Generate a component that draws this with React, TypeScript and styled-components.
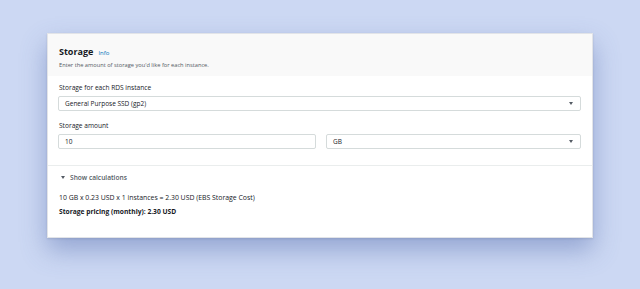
import React from "react";
import styled, { createGlobalStyle } from "styled-components";

const Global = createGlobalStyle`
  html, body { margin: 0; padding: 0; background: #ccd8f3; }
  body { font-family: "Open Sans", "Liberation Sans", sans-serif; }
`;

const Page = styled.div`
  width: 640px;
  height: 289px;
  box-sizing: border-box;
  padding: 33px 47px 0 47px;
  background: #ccd8f3;
`;

const Card = styled.div`
  width: 546px;
  height: 205px;
  box-sizing: border-box;
  background: #ffffff;
  border: 1px solid #e2e4e8;
  box-shadow: 0 12px 24px rgba(80, 105, 170, 0.45), 0 1px 2px rgba(0,0,0,0.12);
  display: flex;
  flex-direction: column;
`;

const Header = styled.div`
  background: #f9f9f9;
  height: 42px;
  box-sizing: border-box;
  padding: 11px 11px 0 11px;
  display: flex;
  flex-direction: column;
  gap: 3px;
`;

const TitleRow = styled.div`
  display: flex;
  align-items: baseline;
  gap: 5px;
`;

const Title = styled.span`
  font-size: 9px;
  font-weight: 700;
  color: #16191f;
`;

const Info = styled.span`
  font-size: 6px;
  color: #0073bb;
`;

const Desc = styled.div`
  font-size: 5.7px;
  color: #545b64;
`;

const Body = styled.div`
  padding: 7px 11px 0 10px;
  display: flex;
  flex-direction: column;
`;

const Label = styled.div`
  font-size: 6.6px;
  color: #16191f;
  margin-bottom: 4px;
  padding-left: 1px;
`;

const Field = styled.div<{ $w?: string }>`
  height: 15px;
  box-sizing: border-box;
  border: 1px solid #d5dbdb;
  border-radius: 2px;
  background: #fff;
  display: flex;
  align-items: center;
  justify-content: space-between;
  padding: 0 7px 0 6px;
  font-size: 6.5px;
  color: #16191f;
  ${(p) => (p.$w ? `width: ${p.$w}; flex: none;` : "flex: 1;")}
`;

const Caret = styled.span`
  width: 0;
  height: 0;
  border-left: 2.5px solid transparent;
  border-right: 2.5px solid transparent;
  border-top: 3.5px solid #545b64;
`;

const Group = styled.div<{ $mb: number }>`
  margin-bottom: ${(p) => p.$mb}px;
`;

const Row = styled.div`
  display: flex;
  gap: 10px;
`;

const Divider = styled.div`
  height: 1px;
  background: #eaeded;
`;

const Calc = styled.div`
  padding: 7px 11px 0 11px;
  display: flex;
  flex-direction: column;
`;

const Toggle = styled.div`
  display: flex;
  align-items: center;
  gap: 5px;
  font-size: 6.6px;
  font-weight: 600;
  color: #545b64;
  margin-bottom: 11px;
`;

const SmallCaret = styled.span`
  width: 0;
  height: 0;
  border-left: 2.5px solid transparent;
  border-right: 2.5px solid transparent;
  border-top: 3.5px solid #545b64;
  margin-left: 2px;
`;

const Line = styled.div<{ $bold?: boolean }>`
  font-size: ${(p) => (p.$bold ? "6.7px" : "6.9px")};
  color: #16191f;
  font-weight: ${(p) => (p.$bold ? 700 : 400)};
  margin-bottom: 5px;
`;

export default function App() {
  return (
    <>
      <Global />
      <Page>
        <Card>
          <Header>
            <TitleRow>
              <Title>Storage</Title>
              <Info>Info</Info>
            </TitleRow>
            <Desc>Enter the amount of storage you'd like for each instance.</Desc>
          </Header>
          <Body>
            <Group $mb={10}>
              <Label>Storage for each RDS instance</Label>
              <Field>
                <span>General Purpose SSD (gp2)</span>
                <Caret />
              </Field>
            </Group>
            <Group $mb={16}>
              <Label>Storage amount</Label>
              <Row>
                <Field $w="258px">
                  <span>10</span>
                </Field>
                <Field>
                  <span>GB</span>
                  <Caret />
                </Field>
              </Row>
            </Group>
          </Body>
          <Divider />
          <Calc>
            <Toggle>
              <SmallCaret />
              <span>Show calculations</span>
            </Toggle>
            <Line>10 GB x 0.23 USD x 1 instances = 2.30 USD (EBS Storage Cost)</Line>
            <Line $bold>Storage pricing (monthly): 2.30 USD</Line>
          </Calc>
        </Card>
      </Page>
    </>
  );
}
